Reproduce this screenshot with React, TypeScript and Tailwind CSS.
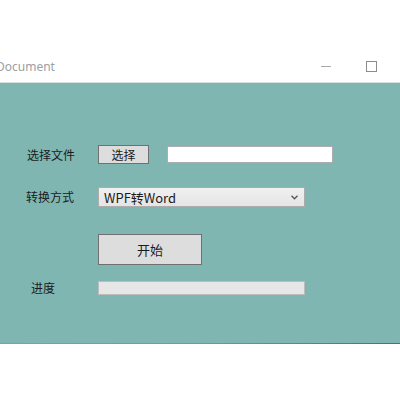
const cjk = "font-['Microsoft_YaHei','Noto_Sans_CJK_SC',sans-serif]";

export default function App() {
  return (
    <div className={`flex h-[400px] w-[400px] flex-col overflow-hidden bg-white text-[12px] text-[#1b1b1b] ${cjk}`}>
      {/* title bar */}
      <div className="flex h-[83px] shrink-0 items-end border-b border-[#d6dfdf] pb-[7px]">
        <span className="ml-[-4px] font-['Noto_Sans',sans-serif] text-[12px] leading-[16px] text-[#9aa0a4]">Document</span>
        <div className="ml-auto flex items-center pb-[3px]">
          <span className="mr-[35px] h-px w-[10px] bg-[#a8a8a8]" />
          <span className="mr-[23px] h-[11px] w-[11px] border border-[#8c8c8c]" />
        </div>
      </div>

      {/* form */}
      <div className="flex h-[260px] shrink-0 flex-col bg-[#7fb6b2] pt-[62px]">
        <div className="flex h-[19px] items-center">
          <span className="w-[98px] pl-[27px]">选择文件</span>
          <button className="flex h-[19px] w-[51px] items-center justify-center border border-[#707070] bg-[#dddddd] leading-none">
            选择
          </button>
          <div className="ml-[18px] h-[17px] w-[166px] border border-[#abadb3] bg-white" />
        </div>

        <div className="mt-[23px] flex h-[20px] items-center">
          <span className="w-[98px] pl-[26px]">转换方式</span>
          <div className="flex h-[20px] w-[207px] items-center border border-[#acacac] bg-gradient-to-b from-[#f0f0f0] to-[#e5e5e5] pl-[5px] pr-[6px]">
            <span className="text-[13px] leading-none">WPF转Word</span>
            <svg className="ml-auto" width="7" height="5" viewBox="0 0 7 5">
              <path d="M0.5 0.8 L3.5 3.8 L6.5 0.8" fill="none" stroke="#555" strokeWidth="1.3" />
            </svg>
          </div>
        </div>

        <div className="mt-[27px] flex h-[31px] items-center">
          <span className="w-[98px]" />
          <button className="flex h-[31px] w-[104px] items-center justify-center border border-[#707070] bg-[#dddddd] text-[13px] leading-none">
            开始
          </button>
        </div>

        <div className="mt-[16px] flex h-[14px] items-center">
          <span className="w-[98px] pl-[31px]">进度</span>
          <div className="h-[14px] w-[207px] border border-[#bcbcbc] bg-[#e6e6e6]" />
        </div>
      </div>
      <div className="h-px shrink-0 bg-gradient-to-r from-[#8a9e98] via-[#a08a70] to-[#4d716b]" />
    </div>
  );
}
